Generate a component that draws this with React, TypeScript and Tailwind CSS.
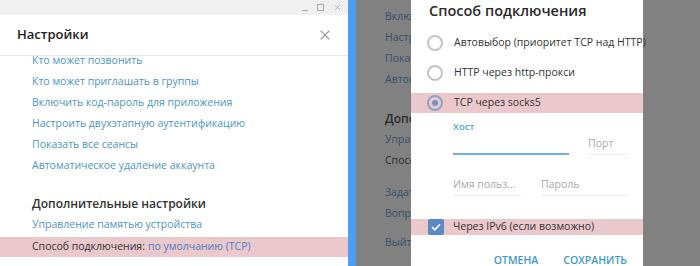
import { X } from "lucide-react";

const privacyLinks = [
  "Кто может позвонить",
  "Кто может приглашать в группы",
  "Включить код-пароль для приложения",
  "Настроить двухэтапную аутентификацию",
  "Показать все сеансы",
  "Автоматическое удаление аккаунта",
];

const font = { fontFamily: "'Open Sans', 'Noto Sans', sans-serif" };

function Radio({ checked }: { checked?: boolean }) {
  return checked ? (
    <span className="shrink-0 w-[16px] h-[16px] rounded-full border-2 border-[#8ea3c7] flex items-center justify-center">
      <span className="w-[6px] h-[6px] rounded-full bg-[#7393c2]" />
    </span>
  ) : (
    <span className="shrink-0 w-[16px] h-[16px] rounded-full border-2 border-[#c4c4c4]" />
  );
}

function SettingsPanel() {
  return (
    <div className="w-[348px] h-full bg-white flex flex-col">
      <div className="h-[15px] bg-[#f0f0f0] flex items-center justify-end gap-[9px] pr-[6px] text-[#a0a0a0]">
        <span className="w-[6px] h-[1px] bg-[#a8a8a8] mt-[5px]" />
        <span className="w-[7px] h-[7px] border border-[#a8a8a8]" />
        <X className="w-[9px] h-[9px]" strokeWidth={2} />
      </div>
      <div className="h-[41px] flex items-center justify-between pl-[17px] pr-[15px] border-b border-[#e8e8e8]">
        <span className="text-[13px] font-semibold text-[#222]">Настройки</span>
        <X className="w-[16px] h-[16px] text-[#9a9a9a]" strokeWidth={1.6} />
      </div>
      <div className="flex-1 overflow-hidden">
        <div className="-mt-[6px] pl-[32px] text-[10.5px] text-[#4b95c9]">
          {privacyLinks.map((t) => (
            <div key={t} className="h-[21px] flex items-center">
              {t}
            </div>
          ))}
          <div className="h-[17px]" />
          <div className="h-[21px] flex items-center text-[12px] font-semibold text-[#333]">
            Дополнительные настройки
          </div>
          <div className="h-[22px] flex items-center">Управление памятью устройства</div>
        </div>
        <div className="mt-[1px] h-[20px] bg-[#ebc8cc] pl-[32px] flex items-center text-[10.5px]">
          <span className="text-[#333]">Способ подключения:</span>
          <span className="text-[#4b7fc0] ml-[3px]">по умолчанию (TCP)</span>
        </div>
      </div>
    </div>
  );
}

function BehindColumn() {
  const row = "h-[21px] flex items-center whitespace-nowrap";
  return (
    <div className="w-[55px] h-full overflow-hidden pl-[29px] pt-[6px] text-[10.5px] text-[#34506a]">
      <div className={row}>Включить код-пароль</div>
      <div className={row}>Настроить двухэтапную</div>
      <div className={row}>Показать все сеансы</div>
      <div className={row}>Автоматическое удаление</div>
      <div className="h-[18px]" />
      <div className={`${row} text-[12px] font-semibold text-[#2c2c2c]`}>Дополнительные</div>
      <div className={row}>Управление памятью</div>
      <div className={`${row} text-[#2a2a2a]`}>Способ подключения</div>
      <div className="h-[11px]" />
      <div className={row}>Задать</div>
      <div className={row}>Вопросы</div>
      <div className="h-[8px]" />
      <div className={row}>Выйти</div>
    </div>
  );
}

function ConnectionModal() {
  return (
    <div className="w-[232px] h-full bg-white flex flex-col text-[10.5px] text-[#333]">
      <div className="h-[24px] flex items-center pl-[18px] text-[14.5px] font-semibold text-[#2a2a2a]">
        Способ подключения
      </div>
      <div className="mt-[11px] flex flex-col gap-[10px]">
        <div className="h-[20px] flex items-center pl-[16px] gap-[11px]">
          <Radio />
          <span className="whitespace-nowrap">Автовыбор (приоритет TCP над HTTP)</span>
        </div>
        <div className="h-[20px] flex items-center pl-[16px] gap-[11px]">
          <Radio />
          <span>HTTP через http-прокси</span>
        </div>
        <div className="h-[20px] flex items-center pl-[16px] gap-[11px] bg-[#ebc8cc]">
          <Radio checked />
          <span>TCP через socks5</span>
        </div>
      </div>
      <div className="pl-[42px] mt-[7px] flex items-end gap-[19px]">
        <div className="w-[116px] flex flex-col">
          <span className="h-[14px] flex items-center text-[9.5px] font-semibold text-[#4aa3d6]">Хост</span>
          <div className="h-[21px] border-b-2 border-[#6ab3de]" />
        </div>
        <div className="w-[40px] h-[21px] border-b border-[#ececec] flex items-center text-[#a8a8a8]">Порт</div>
      </div>
      <div className="pl-[42px] mt-[20px] flex gap-[19px]">
        <div className="w-[69px] h-[21px] border-b border-[#ececec] flex items-center text-[#a8a8a8] whitespace-nowrap">
          Имя польз...
        </div>
        <div className="w-[87px] h-[21px] border-b border-[#ececec] flex items-center text-[#a8a8a8]">Пароль</div>
      </div>
      <div className="mt-[23px] h-[18px] bg-[#ebc8cc] flex items-center pl-[17px] gap-[9px]">
        <span className="shrink-0 w-[16px] h-[16px] rounded-[2px] bg-[#5a89c5] flex items-center justify-center">
          <svg width="10" height="8" viewBox="0 0 10 8" fill="none">
            <path d="M1 4.2 L3.8 6.8 L9 1.2" stroke="white" strokeWidth="1.6" />
          </svg>
        </span>
        <span>Через IPv6 (если возможно)</span>
      </div>
      <div className="mt-[18px] h-[20px] flex items-center justify-end gap-[25px] pr-[16px] text-[10.5px] font-semibold text-[#3f97cf]">
        <span>ОТМЕНА</span>
        <span>СОХРАНИТЬ</span>
      </div>
    </div>
  );
}

export default function App() {
  return (
    <div className="w-[700px] h-[266px] flex overflow-hidden bg-white" style={font}>
      <SettingsPanel />
      <div className="w-[8px] h-full bg-[#4b9ff2]" />
      <div className="flex-1 h-full bg-[#818181] flex">
        <BehindColumn />
        <ConnectionModal />
        <div className="flex-1" />
      </div>
    </div>
  );
}
